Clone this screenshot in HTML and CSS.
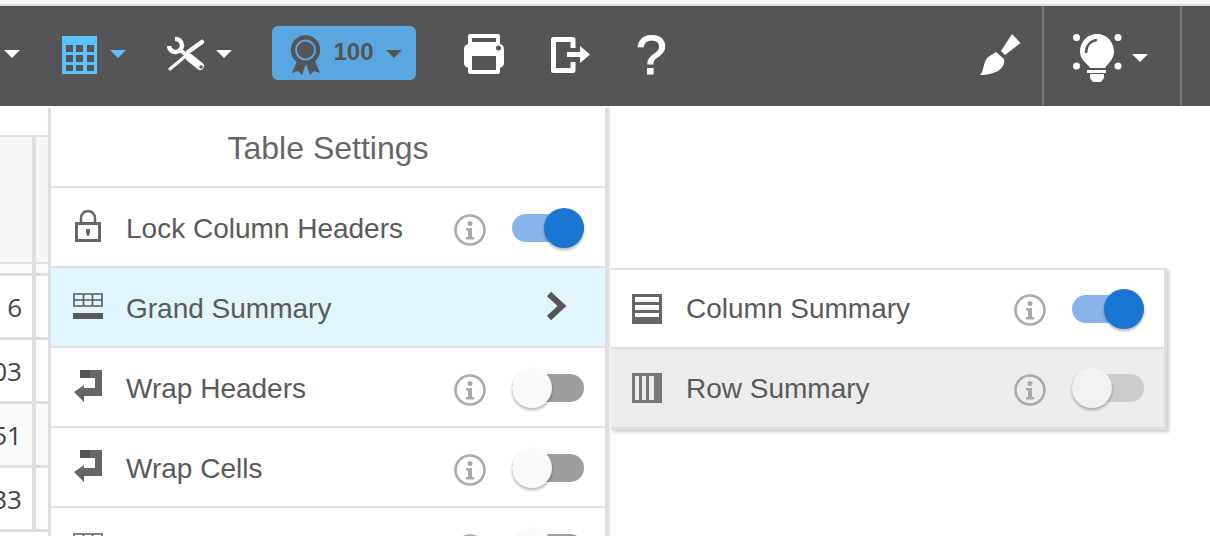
FILE: index.html
```html
<!DOCTYPE html>
<html lang="en">
<head>
<meta charset="utf-8">
<title>Table Settings</title>
<link rel="stylesheet" href="styles.css">
</head>
<body>
<svg class="sprite" aria-hidden="true">
  <symbol id="info" viewBox="0 0 32 32">
    <circle cx="16" cy="16" r="14.5" fill="none" stroke="currentColor" stroke-width="2.6"/>
    <circle cx="16" cy="9.5" r="2.5" fill="currentColor"/>
    <path d="M12 14h6v9h2v2.500h-8V23h2v-6.500h-2z" fill="currentColor"/>
  </symbol>
  <symbol id="wrap" viewBox="0 0 28 32">
    <path d="M6 0h22v26H10v6L0 22l10-7v3h11V8H6z" fill="currentColor"/>
    <path d="M6 0h10v8H6z" fill="#555"/>
  </symbol>
  <symbol id="grid" viewBox="0 0 30 26">
    <path d="M1 1h28v12H1zM1 7h28M10.500 1v12M19.500 1v12" fill="none" stroke="currentColor" stroke-width="1.600"/>
    <path d="M0 20h30v6H0z" fill="currentColor"/>
  </symbol>
  <symbol id="caret" viewBox="0 0 16 8">
    <path d="M0 0h16L8 8z" fill="currentColor"/>
  </symbol>
</svg>

<div class="strip"></div>
<header class="toolbar">
  <svg class="caret first"><use href="#caret"/></svg>
  <svg class="tb-table" viewBox="0 0 35 38">
    <path d="M0 0h35v38H0z" fill="#5cc1ff"/>
    <path d="M4 9h7v7H4zM14 9h7v7h-7zM25 9h7v7h-7zM4 19h7v7H4zM14 19h7v7h-7zM25 19h7v7h-7zM4 29h7v6H4zM14 29h7v6h-7zM25 29h7v6h-7z" fill="#555"/>
  </svg>
  <svg class="caret near blue"><use href="#caret"/></svg>
  <svg class="tb-tools" viewBox="0 0 40 34">
    <path d="M9 2A6.500 6.500 0 1 1 3 9" fill="none" stroke="#fff" stroke-width="4.500"/>
    <path d="M14 13l9 7" stroke="#fff" stroke-width="4" fill="none"/>
    <path d="M24 21l10 8" stroke="#fff" stroke-width="8" stroke-linecap="round" fill="none"/>
    <path d="M4 32l18-15" stroke="#fff" stroke-width="3" stroke-linecap="round" fill="none"/>
    <path d="M22 15L36 5" stroke="#fff" stroke-width="4.500" stroke-linecap="round" fill="none"/>
    <circle cx="35" cy="30" r="1.800" fill="#555"/>
  </svg>
  <svg class="caret close"><use href="#caret"/></svg>
  <button class="award" type="button">
    <svg class="ribbon" viewBox="0 0 31 40">
      <path d="M8 24L2 38l6-2 4 4 4-11 4 11 4-4 6 2-6-14z" fill="#555"/>
      <circle cx="15.500" cy="15" r="14.700" fill="#555"/>
      <circle cx="15.500" cy="15" r="9.500" fill="#555" stroke="#5aa6e0" stroke-width="2"/>
    </svg>
    <span class="award-num">100</span>
    <svg class="caret dark"><use href="#caret"/></svg>
  </button>
  <svg class="tb-print" viewBox="0 0 40 40">
    <rect x="4" y="0" width="32" height="16" rx="2.500" fill="#fff"/>
    <rect x="8" y="4" width="24" height="4" fill="#555"/>
    <rect x="0" y="10" width="40" height="24" rx="5" fill="#fff"/>
    <rect x="4" y="20" width="32" height="20" rx="2.500" fill="#fff"/>
    <rect x="8" y="22" width="24" height="14" fill="#555"/>
    <circle cx="34.500" cy="14" r="2.500" fill="#555"/>
  </svg>
  <svg class="tb-exit" viewBox="0 0 40 36">
    <path d="M22 11V2.500H2.500v31H22V25" fill="none" stroke="#fff" stroke-width="5" stroke-linejoin="round"/>
    <path d="M16 15h13V9l10 8.500L29 26v-6H16z" fill="#fff"/>
  </svg>
  <span class="tb-help">?</span>
  <span class="grow"></span>
  <svg class="tb-brush" viewBox="0 0 41 41">
    <path d="M32 0l8.500 9L25 21l-4-4z" fill="#fff"/>
    <path d="M16 18l8 7c2 9-8 16-24 16 3-3 3-8 5-13 2-6 7-7 11-10z" fill="#fff"/>
  </svg>
  <span class="divider"></span>
  <svg class="tb-bulb" viewBox="0 0 51 48">
    <path d="M25 0c10 0 17 8 17 18 0 8-7 12-9 16H18c-2-4-10-8-10-16C8 8 15 0 25 0z" fill="#fff"/>
    <path d="M14 19c0-7 4-12 11-13" fill="none" stroke="#555" stroke-width="2.500"/>
    <ellipse cx="4.500" cy="3.500" rx="3.500" ry="3.500" fill="#fff"/>
    <ellipse cx="46" cy="3.500" rx="3.500" ry="3.500" fill="#fff"/>
    <ellipse cx="4.500" cy="32" rx="3.500" ry="3.500" fill="#fff"/>
    <ellipse cx="46" cy="32" rx="3.500" ry="3.500" fill="#fff"/>
    <path d="M15 36h19v3H15zM18 40h14v4l-3 4h-8l-3-4z" fill="#fff"/>
  </svg>
  <svg class="caret bulb-caret"><use href="#caret"/></svg>
  <span class="divider last"></span>
</header>

<main class="main">
  <div class="grid-table">
    <div class="head-gap"></div>
    <div class="head-row"><div class="cell c1"></div><div class="cell c2"></div></div>
    <div class="head-filter"><div class="cell c1"></div><div class="cell c2"></div></div>
    <div class="row"><div class="cell c1"><span>6</span></div><div class="cell c2"></div></div>
    <div class="row"><div class="cell c1"><span>103</span></div><div class="cell c2"></div></div>
    <div class="row alt"><div class="cell c1"><span>351</span></div><div class="cell c2"></div></div>
    <div class="row"><div class="cell c1"><span>333</span></div><div class="cell c2"></div></div>
  </div>

  <section class="menu">
    <h2 class="menu-title">Table Settings</h2>
    <div class="item">
      <svg class="ic-lock" viewBox="0 0 26 32">
        <path d="M6 15V8a7 7 0 0 1 14 0v7" fill="none" stroke="#666" stroke-width="2.500"/>
        <path d="M1.500 13.500h23v17h-23z" fill="none" stroke="#666" stroke-width="3"/>
        <path d="M11 19h4v3l-1 4h-2l-1-4z" fill="#666"/>
      </svg>
      <span class="label">Lock Column Headers</span>
      <svg class="info"><use href="#info"/></svg>
      <span class="toggle on"><span class="knob"></span></span>
    </div>
    <div class="item active">
      <svg class="ic-grid"><use href="#grid"/></svg>
      <span class="label">Grand Summary</span>
      <svg class="chevron" viewBox="0 0 21 30">
        <path d="M3 3l13 12L3 27" fill="none" stroke="#555" stroke-width="6"/>
      </svg>
      <div class="submenu">
        <div class="item sub-first">
          <svg class="ic-lines" viewBox="0 0 30 30">
            <path d="M0 0h30v30H0z" fill="#666"/>
            <path d="M3 3h24v5H3zM3 11h24v5H3zM3 19h24v4H3z" fill="#fff"/>
          </svg>
          <span class="label">Column Summary</span>
          <svg class="info"><use href="#info"/></svg>
          <span class="toggle on"><span class="knob"></span></span>
        </div>
        <div class="item disabled">
          <svg class="ic-lines" viewBox="0 0 30 30">
            <path d="M0 0h30v30H0z" fill="#777"/>
            <path d="M3 3h4v24H3zM10 3h4v24h-4zM17 3h5v24h-5z" fill="#ececec"/>
          </svg>
          <span class="label">Row Summary</span>
          <svg class="info"><use href="#info"/></svg>
          <span class="toggle off"><span class="knob"></span></span>
        </div>
      </div>
    </div>
    <div class="item">
      <svg class="ic-wrap"><use href="#wrap"/></svg>
      <span class="label">Wrap Headers</span>
      <svg class="info"><use href="#info"/></svg>
      <span class="toggle off"><span class="knob"></span></span>
    </div>
    <div class="item">
      <svg class="ic-wrap"><use href="#wrap"/></svg>
      <span class="label">Wrap Cells</span>
      <svg class="info"><use href="#info"/></svg>
      <span class="toggle off"><span class="knob"></span></span>
    </div>
    <div class="item">
      <svg class="ic-grid"><use href="#grid"/></svg>
      <span class="label"></span>
      <svg class="info"><use href="#info"/></svg>
      <span class="toggle off"><span class="knob"></span></span>
    </div>
  </section>
</main>
</body>
</html>
```
FILE: styles.css
```css
* { box-sizing: border-box; }
html, body { margin: 0; height: 100%; overflow: hidden; background: #fff; }
body { font-family: "Liberation Sans", Arial, sans-serif; color: #5a5a5a; }
.sprite { display: none; }

.strip { height: 6px; background: #f7f7f7; border-bottom: 2px solid #dedede; }

.toolbar { height: 100px; background: #555; display: flex; align-items: center; padding-left: 4px; color: #fff; }
.toolbar svg { display: block; flex: none; }
.caret { width: 16px; height: 8px; color: #fff; margin-top: -4px; }
.caret.near { margin-left: 13px; }
.caret.close { margin-left: 10px; }
.caret.blue { color: #5cc1ff; }
.tb-table { width: 35px; height: 38px; margin-left: 42px; margin-top: -2px; }
.tb-tools { width: 40px; height: 34px; margin-left: 40px; margin-top: -4px; }
.award { width: 144px; height: 54px; margin-left: 40px; margin-top: -6px; border: 0; border-radius: 6px; background: #5aa6e0; display: flex; align-items: center; padding: 0 0 0 18px; font: inherit; color: #555; }
.ribbon { width: 31px; height: 40px; margin-top: 4px; }
.award-num { font-size: 24px; font-weight: 700; margin-left: 12px; margin-top: -2px; width: 41px; }
.caret.dark { color: #555; margin-left: 12px; margin-top: 2px; }
.tb-print { width: 40px; height: 40px; margin-left: 48px; margin-top: -4px; }
.tb-exit { width: 40px; height: 36px; margin-left: 47px; margin-top: -2px; }
.tb-help { width: 30px; margin-left: 45px; margin-top: -2px; font-size: 55px; line-height: 60px; text-align: center; font-weight: 400; -webkit-text-stroke: 1.2px #fff; }
.grow { flex: 1; }
.tb-brush { width: 41px; height: 41px; margin-top: -3px; }
.divider { width: 2px; height: 100%; background: #777; margin-left: 21px; }
.tb-bulb { width: 51px; height: 48px; margin-left: 28px; margin-top: 4px; }
.caret.bulb-caret { margin-left: 9px; margin-top: 3px; }
.divider.last { margin-left: 32px; margin-right: 28px; }

.main { position: relative; height: 430px; overflow: hidden; }

.grid-table { width: 48px; }
.head-gap { height: 31px; border-bottom: 2px solid #dedede; }
.head-row, .head-filter, .row { display: flex; }
.head-row { height: 127px; border-bottom: 2px solid #dedede; background: #f6f6f6; }
.head-filter { height: 12px; border-bottom: 3px solid #dedede; background: #fcfcfc; }
.row { height: 64px; border-bottom: 3px solid #dedede; }
.row.alt { background: #fafafa; }
.cell { height: 100%; }
.c1 { width: 36px; border-right: 4px solid #dedede; display: flex; justify-content: flex-end; align-items: center; padding: 1px 10px 0 0; overflow: hidden; font-family: "Open Sans", sans-serif; font-size: 26px; color: #444; }
.c2 { width: 12px; }

.menu { position: absolute; left: 48px; top: 2px; width: 561px; border-left: 3px solid #dedede; border-right: 4px solid #dedede; background: #fff; box-shadow: 1px 0 2px #e4e4e4; }
.menu-title { margin: 0; height: 80px; border-bottom: 2px solid #dedede; font-size: 32px; font-weight: 400; line-height: 80px; text-align: center; color: #666; }

.item { height: 80px; border-bottom: 2px solid #dedede; display: flex; align-items: center; padding-left: 22px; position: relative; }
.item > svg { display: block; flex: none; }
.item.active { background: #e1f5fe; }
.label { font-size: 28px; margin-left: 23px; width: 328px; flex: none; margin-top: 4px; white-space: nowrap; }
.info { width: 32px; height: 32px; color: #aaa; margin-top: 6px; }
.ic-lock { width: 26px; height: 32px; margin: -2px 2px 0; }
.ic-grid { width: 30px; height: 26px; color: #5a5a5a; margin-top: -2px; }
.ic-wrap { width: 28px; height: 32px; color: #666; margin: -2px 1px 0; }
.ic-lines { width: 30px; height: 30px; }
.chevron { width: 21px; height: 30px; margin-left: 92px; margin-top: -2px; }

.toggle { width: 72px; height: 28px; border-radius: 14px; margin-left: 26px; position: relative; flex: none; margin-top: 2px; }
.toggle.on { background: #8ab4e8; }
.toggle.off { background: #9e9e9e; }
.knob { position: absolute; top: -6px; width: 40px; height: 40px; border-radius: 50%; box-shadow: 0 2px 3px rgba(0,0,0,.3); }
.toggle.on .knob { right: 0; background: #1976d2; }
.toggle.off .knob { left: 0; background: #fafafa; }

.submenu { position: absolute; left: 560px; top: 0; width: 556px; background: #fff; border-top: 2px solid #dedede; border-right: 3px solid #dedede; border-bottom: 3px solid #dedede; box-shadow: 2px 2px 3px #c9c9c9; }
.submenu .item { padding-left: 21px; }
.submenu .label { margin-left: 24px; margin-top: 2px; }
.submenu .sub-first .label { margin-top: 0; }
.submenu .info { margin-top: 3px; }
.submenu .toggle { margin-top: 0; }
.submenu .sub-first { height: 79px; }
.submenu .disabled { height: 78px; border-bottom: 0; background: #ececec; }
.submenu .toggle.off { background: #ccc; }
.submenu .toggle.off .knob { background: #f2f2f2; }
```
